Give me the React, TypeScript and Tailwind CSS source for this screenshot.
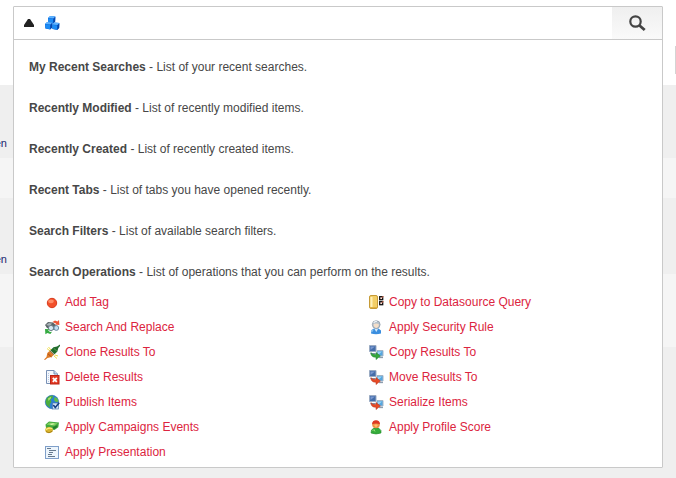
import type { ReactNode } from "react";

function Icon({ children }: { children: ReactNode }) {
  return (
    <svg className="size-4 shrink-0" viewBox="0 0 16 16" aria-hidden="true">
      {children}
    </svg>
  );
}

function Cube({ x, y }: { x: number; y: number }) {
  return (
    <g transform={`translate(${x} ${y})`}>
      <path d="M0 2 L2.2 0 L7.4 .6 L7.2 5.4 L5.2 7.6 L.3 6.6Z" fill="#0b62d6" />
      <path d="M0 2 L2.2 0 L7.4 .6 L5.4 2.6Z" fill="#5fb4ff" />
      <path d="M.2 2.3 L5.2 2.9 L5 7.2 L.5 6.3Z" fill="#1c8cf5" />
      <path d="M5.5 2.7 L7.3 1 L7.1 5.3 L5.3 7.4Z" fill="#0647ab" />
    </g>
  );
}

function CubesIcon() {
  return (
    <Icon>
      <Cube x={4} y={1} />
      <Cube x={1} y={7} />
      <Cube x={8} y={7.5} />
    </Icon>
  );
}

function TagIcon() {
  return (
    <Icon>
      <circle cx="8" cy="9" r="4.7" fill="#f2502a" stroke="#d93a1c" />
      <ellipse cx="7" cy="7.3" rx="2.8" ry="1.9" fill="#ff8d68" />
    </Icon>
  );
}

function ReplaceIcon() {
  return (
    <Icon>
      <path d="M1 6 L4 3 L9 3.5 L13 7 L12 11 L8 11 L3 9Z" fill="#5b6468" />
      <path d="M2 6 L5 4 L8 4.6 L6 7Z" fill="#a9b4b8" />
      <circle cx="7" cy="9" r="2.6" fill="#d7e8f4" stroke="#6d7f89" />
      <circle cx="12.3" cy="9" r="2.4" fill="#c4def2" stroke="#6d8da4" />
      <path d="M8.5 3 L11 1.6 L13.4 2.4 L15 1 L15.4 6 L11 5.6 L12.2 4.4 L10 3.8Z" fill="#ee5538" />
      <path d="M1 10 L5.4 10.3 L4.2 11.6 L6 13 L8 12.8 L6.4 15 L3.4 14 L1.4 15.2Z" fill="#35ab42" />
    </Icon>
  );
}

function CloneIcon() {
  return (
    <Icon>
      <path d="M3 4.5 L6 7 M10 12 L13 14.5 M4.5 3 L7 6 M11 11 L14 12" stroke="#f2df45" strokeWidth="1" />
      <path d="M0 15.5 L2.5 13 L3.3 9 L5.5 7 L9.7 11 L7.5 13 L3.5 14 L1 16Z" fill="#dd7a27" />
      <path d="M4 9.8 L7.6 13" stroke="#a9501a" />
      <path d="M16 .4 L13 2.5 L9.5 3.3 L6.4 6.2 L10.6 10.2 L13.4 7.5 L14.3 4 L16 2Z" fill="#216b2c" />
      <path d="M9.8 4.4 L13 7.2" stroke="#57a34e" />
      <path d="M5.8 6.6 L10.2 10.8" stroke="#6b4316" />
    </Icon>
  );
}

function DeleteIcon() {
  return (
    <Icon>
      <path d="M2.5 1.5 H10 L13.5 5 V14.5 H2.5Z" fill="#f3f7fd" stroke="#7991b5" />
      <path d="M10 1.5 V5 H13.5" fill="#cad9ee" stroke="#7991b5" />
      <path d="M4.5 4 V13" stroke="#b7c8e1" strokeDasharray="1 1" />
      <rect x="6.5" y="6.5" width="8.5" height="8.5" fill="#e43a24" stroke="#b92215" />
      <path d="M8.8 8.8 L12.8 12.8 M12.8 8.8 L8.8 12.8" stroke="#fff" strokeWidth="1.8" />
    </Icon>
  );
}

function PublishIcon() {
  return (
    <Icon>
      <circle cx="8" cy="8" r="6.7" fill="#2b7fd2" stroke="#2569ad" strokeWidth=".6" />
      <path d="M5 2.2 L9 1.6 L8.6 4 L6.6 5.3 L7.4 7.8 L5.5 10.8 L6.3 14 L2.5 11 L1.6 7.5 L2.8 4.2Z" fill="#4dae3c" />
      <path d="M10.5 3 L13.3 4.3 L14.5 7.5 L12 8.3 L10 6.2Z" fill="#63bd48" />
      <path d="M4 4.5 L7 2.7 L7 4.3 L4.5 7Z" fill="#a9df75" />
      <rect x="8.5" y="9" width="6" height="6" fill="#d5e7f8" stroke="#4c76ad" strokeWidth=".7" />
      <path d="M9.3 11 L11.3 13.5 L15.2 8.8" fill="none" stroke="#173f83" strokeWidth="1.6" />
    </Icon>
  );
}

function CampaignIcon() {
  return (
    <Icon>
      <path d="M1.5 5.5 L5 2.5 L15 3.5 L14.3 8.2 L10.5 11 L2 9Z" fill="#42a83e" />
      <path d="M2.3 5.7 L5.3 3.4 L13.7 4.3 L10.5 6.7Z" fill="#7bd05d" />
      <path d="M5.5 5 L9 4.3 L11 5.1 L7.5 5.9Z" fill="#d9f4ad" />
      <path d="M9 8 L13.5 6.3 L13 8.2 L9.4 10.4Z" fill="#217d2c" />
      <ellipse cx="5" cy="11" rx="3.8" ry="2.9" fill="#d9b52d" />
      <path d="M2 10.5 L5 9 L8.4 9.5" fill="none" stroke="#fff18e" strokeWidth="1.2" />
      <path d="M2 12.5 L5 13.8 L8.5 12" fill="none" stroke="#a98219" />
    </Icon>
  );
}

function PresentationIcon() {
  return (
    <Icon>
      <rect x="1.5" y="2.5" width="13" height="12" fill="#edf5fc" stroke="#7f9fc9" />
      <path d="M3 4.5 H7 M5 6.5 H12 M5 8.5 H9 M4 10.5 H8 M4 12.5 H11" stroke="#66798e" />
    </Icon>
  );
}

function DatasourceIcon() {
  return (
    <Icon>
      <rect x="1.5" y="1.5" width="8" height="13" rx="1.5" fill="#f3cf68" stroke="#c69b37" />
      <path d="M3.5 3 V13" stroke="#fff0ba" strokeWidth="2" />
      <path d="M2 13.5 H9" stroke="#e0b043" />
      <rect x="11.7" y="2.7" width="3" height="3" fill="#fff" stroke="#111" strokeWidth="1.3" />
      <rect x="11.7" y="7.7" width="3" height="3" fill="#fff" stroke="#111" strokeWidth="1.3" />
      <path d="M13 4.5 L15.5 2 M13 9.5 L15.5 7" stroke="#eb7254" />
    </Icon>
  );
}

function SecurityIcon() {
  return (
    <Icon>
      <path d="M3 14.5 L3.5 11 L6 9.5 H10.5 L13 11.5 V14.5 Q8 16 3 14.5Z" fill="#3a8edf" />
      <path d="M6.5 10 L8.3 13 L10 10Z" fill="#d4eafa" />
      <path d="M4 13 V12 L5.5 11" fill="none" stroke="#8ec9f5" />
      <circle cx="8.2" cy="5.6" r="3.9" fill="#b7c1ca" stroke="#8997a3" strokeWidth=".7" />
      <path d="M5.7 5 Q8.2 3.8 10.7 5 V7 Q8.2 11 5.7 7Z" fill="#f5dfc9" />
      <path d="M5.7 4 Q7 1.9 9 2.5" fill="none" stroke="#edf3f7" strokeWidth="1.2" />
    </Icon>
  );
}

function TransferIcon({ kind }: { kind: "copy" | "move" }) {
  return (
    <Icon>
      <path d="M1.5 1.5 H8 V7.5 H1.5Z" fill="#446da9" stroke="#9aabc3" />
      <path d="M2.5 2.5 H7 L2.5 6Z" fill="#7997cf" />
      <path d="M2 9 H8 L7 10.5 H3Z" fill="#8293a7" />
      <path d="M9 6.5 H15 V12 H9Z" fill="#55a6df" stroke="#a4b4c6" />
      <path d="M10 7.5 H14 L10 11Z" fill="#9ed5f4" />
      <path d="M11 13.5 H15" stroke="#8e9dad" strokeWidth="1.3" />
      <path
        d="M3 8.5 Q4 11 8 10.5 V8.5 L12.4 12 L8 15.6 V13.2 Q2.8 13.5 3 8.5Z"
        fill={kind === "copy" ? "#35a63c" : "#e64a25"}
        stroke={kind === "copy" ? "#208332" : "#b7331c"}
        strokeWidth=".5"
      />
    </Icon>
  );
}

function ProfileIcon() {
  return (
    <Icon>
      <path d="M3 14 L3.5 11 L6 9 H10.5 L13 11.5 V14 Q8 16 3 14Z" fill="#35ac3b" stroke="#218d2b" strokeWidth=".6" />
      <path d="M4.5 12 L6 10.5 L7 12.5" fill="none" stroke="#91df76" />
      <circle cx="8" cy="5.5" r="3.8" fill="#ef9145" />
      <path d="M4.1 5.3 Q4.2 1.3 8 1.3 Q11.8 1.3 12 5.3 Q8 3.7 4.1 5.3Z" fill="#dd3823" />
      <path d="M6 6 Q8 4.7 10 6 L8 8.5Z" fill="#ffc06d" />
    </Icon>
  );
}

const sections = [
  ["My Recent Searches", "List of your recent searches."],
  ["Recently Modified", "List of recently modified items."],
  ["Recently Created", "List of recently created items."],
  ["Recent Tabs", "List of tabs you have opened recently."],
  ["Search Filters", "List of available search filters."],
  ["Search Operations", "List of operations that you can perform on the results."],
];

const operations: { label: string; icon: ReactNode }[] = [
  { label: "Add Tag", icon: <TagIcon /> },
  { label: "Search And Replace", icon: <ReplaceIcon /> },
  { label: "Clone Results To", icon: <CloneIcon /> },
  { label: "Delete Results", icon: <DeleteIcon /> },
  { label: "Publish Items", icon: <PublishIcon /> },
  { label: "Apply Campaigns Events", icon: <CampaignIcon /> },
  { label: "Apply Presentation", icon: <PresentationIcon /> },
  { label: "Copy to Datasource Query", icon: <DatasourceIcon /> },
  { label: "Apply Security Rule", icon: <SecurityIcon /> },
  { label: "Copy Results To", icon: <TransferIcon kind="copy" /> },
  { label: "Move Results To", icon: <TransferIcon kind="move" /> },
  { label: "Serialize Items", icon: <TransferIcon kind="move" /> },
  { label: "Apply Profile Score", icon: <ProfileIcon /> },
];

function ResultLink() {
  return (
    <div className="flex w-[7px] justify-end overflow-hidden">
      <a href="#" className="text-[11px] leading-4 text-[#16256e]">
        en
      </a>
    </div>
  );
}

function PageBehind() {
  return (
    <div className="flex min-h-screen flex-col bg-[#efefef]">
      <div className="flex h-[85px] items-start justify-end bg-white pt-[46px]">
        <div className="h-7 w-px bg-[#d4d4d4]" />
      </div>
      <div className="h-[73px] pt-[50px]">
        <ResultLink />
      </div>
      <div className="h-10 bg-[#f5f5f5]" />
      <div className="h-[76px] pt-[53px]">
        <ResultLink />
      </div>
      <div className="h-[73px] bg-[#f5f5f5]" />
    </div>
  );
}

export default function App() {
  return (
    <div className="relative font-['Liberation_Sans',Arial,sans-serif] text-xs">
      <PageBehind />
      <div className="absolute inset-x-[13px] top-1.5 rounded-[1px] border border-[#c9c9c9] bg-white">
        <form className="flex h-[33px] border-b border-[#c9c9c9]" onSubmit={(e) => e.preventDefault()}>
          <button type="button" aria-label="Close search options" className="flex w-[30px] items-center justify-center">
            <svg className="h-2 w-2.5" viewBox="0 0 10 8" aria-hidden="true">
              <path d="M4 0 H6 L10 6 V8 H0 V6Z" fill="#222" />
            </svg>
          </button>
          <button type="button" aria-label="Search type" className="flex items-center">
            <CubesIcon />
          </button>
          <input type="text" aria-label="Search" className="min-w-0 flex-1 px-2 outline-none" />
          <button
            type="submit"
            aria-label="Run search"
            className="flex w-[50px] items-center justify-center bg-linear-to-b from-[#efefef] to-[#fafafa]"
          >
            <svg className="size-[17px]" viewBox="0 0 17 17" fill="none" aria-hidden="true">
              <circle cx="6.5" cy="6.5" r="5.2" stroke="#444" strokeWidth="2.2" />
              <path d="M10.5 10.5 L15.7 15" stroke="#444" strokeWidth="2.8" />
            </svg>
          </button>
        </form>
        <div className="flex flex-col gap-[25px] pt-[19px] pl-[15px] text-[#474747]">
          {sections.map(([title, text]) => (
            <p key={title} className="leading-4">
              <b>{title}</b> - {text}
            </p>
          ))}
        </div>
        <ul className="mt-[9px] grid grid-flow-col grid-cols-2 grid-rows-7 pb-[3px]">
          {operations.map(({ label, icon }) => (
            <li key={label} className="flex h-[25px] items-center pl-[30px]">
              <a href="#" className="flex items-center gap-[5px] leading-4 text-[#dc2440]">
                {icon}
                {label}
              </a>
            </li>
          ))}
        </ul>
      </div>
    </div>
  );
}
